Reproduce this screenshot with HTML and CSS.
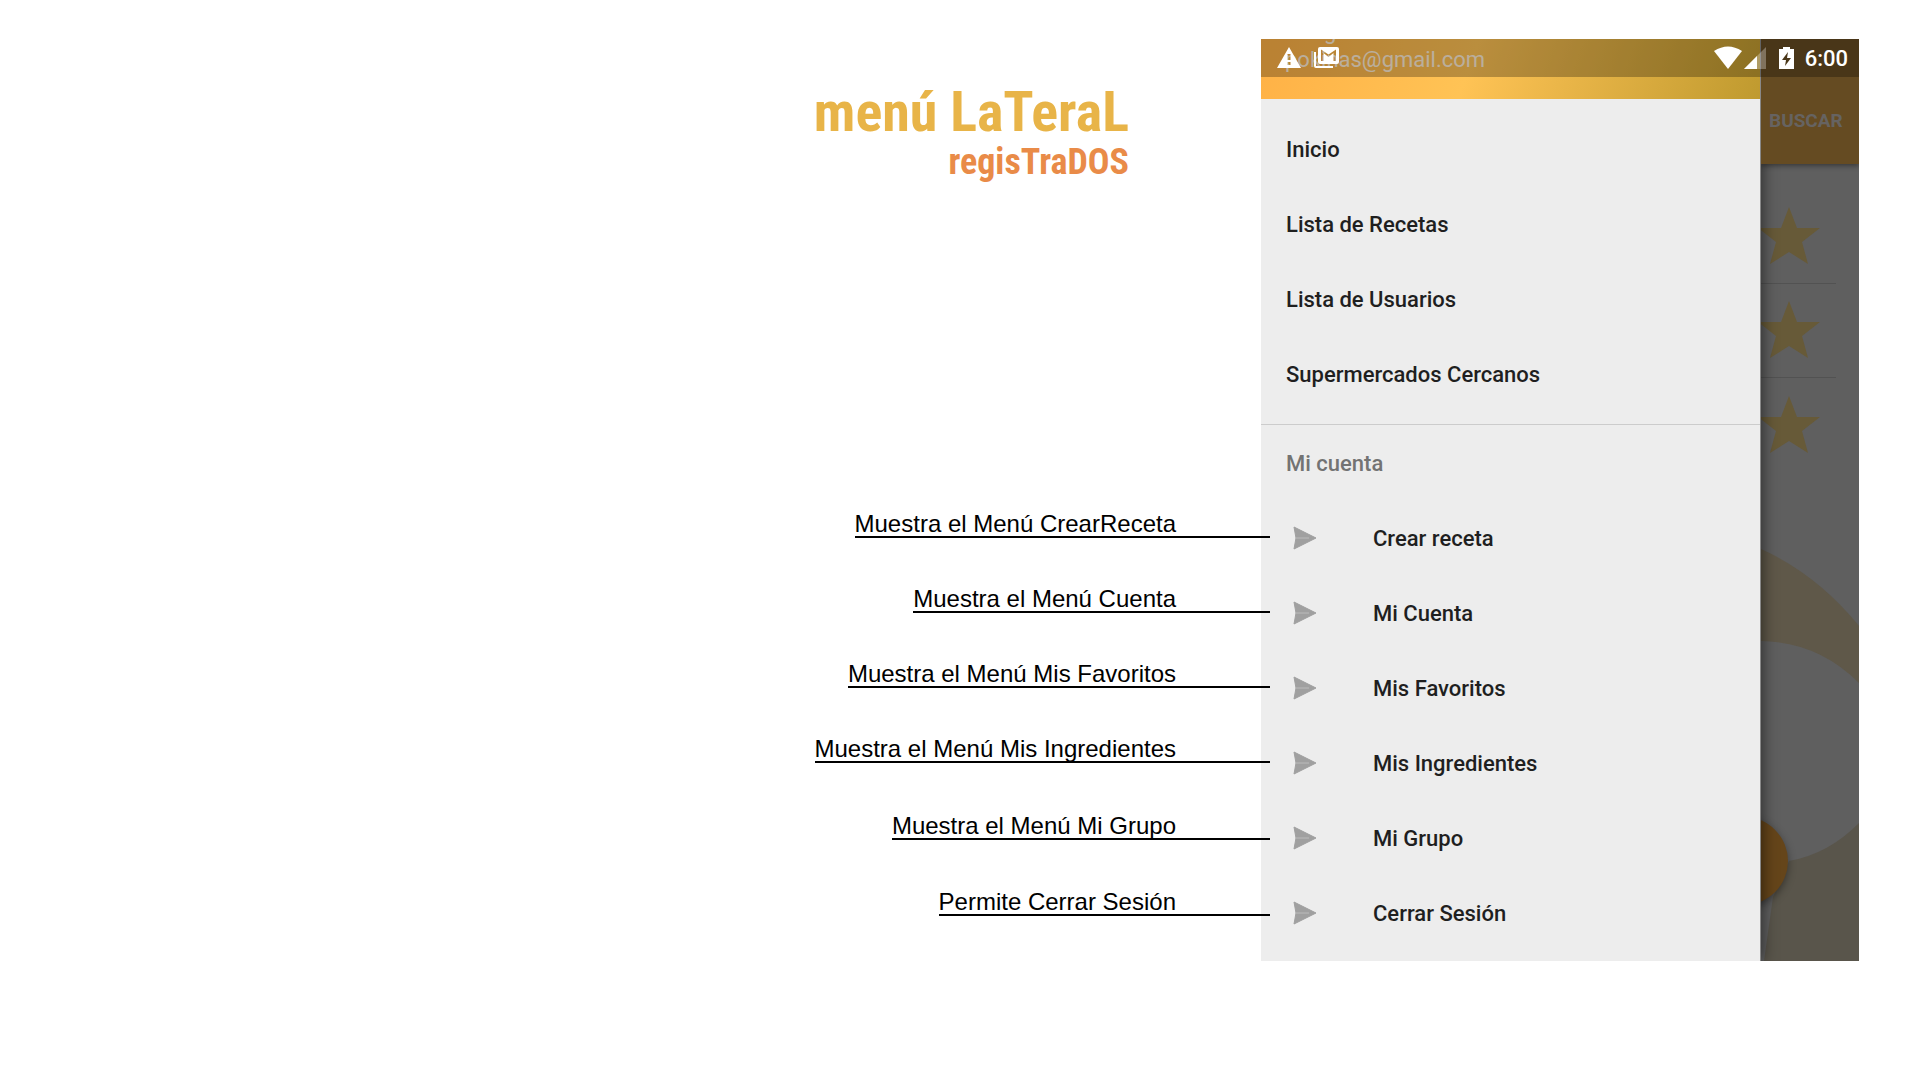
FILE: index.html
```html
<!DOCTYPE html>
<html lang="es">
<head>
<meta charset="utf-8">
<title>Menú lateral</title>
<link rel="stylesheet" href="styles.css">
</head>
<body>
<main class="slide">
  <section class="notes">
    <h1 class="title">menú LaTeraL<span class="subtitle">regisTraDOS</span></h1>
    <ul class="callouts">
      <li><span class="callout">Muestra el Menú CrearReceta</span></li>
      <li><span class="callout">Muestra el Menú Cuenta</span></li>
      <li><span class="callout">Muestra el Menú Mis Favoritos</span></li>
      <li><span class="callout">Muestra el Menú Mis Ingredientes</span></li>
      <li><span class="callout">Muestra el Menú Mi Grupo</span></li>
      <li><span class="callout">Permite Cerrar Sesión</span></li>
    </ul>
  </section>

  <section class="phone">
    <div class="drawer">
      <header class="account">
        <span class="name">Morgan</span>
        <span class="email">pokinas@gmail.com</span>
      </header>
      <nav class="menu">
        <a href="#">Inicio</a>
        <a href="#">Lista de Recetas</a>
        <a href="#">Lista de Usuarios</a>
        <a href="#">Supermercados Cercanos</a>
      </nav>
      <nav class="menu own">
        <h2>Mi cuenta</h2>
        <a href="#"><svg class="send" viewBox="0 0 24 24"><use href="#send"/></svg>Crear receta</a>
        <a href="#"><svg class="send" viewBox="0 0 24 24"><use href="#send"/></svg>Mi Cuenta</a>
        <a href="#"><svg class="send" viewBox="0 0 24 24"><use href="#send"/></svg>Mis Favoritos</a>
        <a href="#"><svg class="send" viewBox="0 0 24 24"><use href="#send"/></svg>Mis Ingredientes</a>
        <a href="#"><svg class="send" viewBox="0 0 24 24"><use href="#send"/></svg>Mi Grupo</a>
        <a href="#"><svg class="send" viewBox="0 0 24 24"><use href="#send"/></svg>Cerrar Sesión</a>
      </nav>
    </div>
    <div class="app">
      <div class="appbar"><button class="search" type="button">BUSCAR</button></div>
      <svg class="scene" viewBox="0 0 99 797" preserveAspectRatio="xMinYMin slice">
        <path fill="#5f5849" d="M0 385Q56 410 99 463V797H0z"/>
        <path fill="#59554b" d="M0 640H99V797H0z"/>
        <path fill="#5f5f5f" d="M0 477Q58 478 99 520V658Q68 690 28 697L12 733L3 797H0z"/>
        <g fill="#675a38">
          <path id="star" d="M28 43l8 21h23L41 78l6 22-19-12-19 12 6-22L-3 64h23z"/>
          <use href="#star" y="94"/><use href="#star" y="189"/>
        </g>
        <path stroke="#525252" d="M0 119.500H75M0 213.500H75"/>
        <circle class="fab" cx="-17" cy="697" r="44" fill="#65451a"/>
      </svg>
    </div>
    <div class="status">
      <svg class="alerts" viewBox="0 0 64 22" fill="#fff">
        <path fill-rule="evenodd" d="M12 0L24 21H0zM10.500 7v6h3V7zM10.500 15v3h3v-3z"/>
        <path d="M39 5v14h17v2H39q-2 0-2-2V5z"/>
        <path fill-rule="evenodd" d="M43 0h17q2 0 2 2v13q0 2-2 2H43q-2 0-2-2V2q0-2 2-2zM44 2.500V14h2.500V6l5 4 5-4v8H59V2.500l-7.500 5z"/>
      </svg>
      <svg class="signals" viewBox="0 0 82 24" fill="#fff">
        <path d="M0 5Q14-4 28 5L14 23z"/>
        <path opacity=".3" d="M52 1v22H30z"/><path d="M43 10v13H30z"/>
        <path fill-rule="evenodd" d="M69 1h7v2h4v20H65V3h4zM74 6l-6 8h4l-1 6 6-8h-4z"/>
      </svg>
      <time>6:00</time>
    </div>
  </section>
</main>
<svg class="defs" width="0" height="0"><defs>
  <g id="send"><path fill="#a0a0a0" stroke="#a0a0a0" stroke-linejoin="round" d="M1 1L23 12L1 23L3 12z"/><path stroke="#bbb" d="M3 12H16"/></g>
</defs></svg>
</body>
</html>
```
FILE: styles.css
```css
* { box-sizing: border-box; }
body { margin: 0; background: #fff; font-family: Roboto, sans-serif; }
.defs { position: absolute; }
.slide { display: grid; grid-template-columns: 1261fr 598fr; padding: 39px 61px 0 0; }

.notes { z-index: 2; margin-right: -9px; display: flex; flex-direction: column; align-items: flex-end; }
.title { margin: 40px 141px 0 0; font: bold 56px/66px "Roboto Condensed", "Liberation Sans Narrow", sans-serif; color: #e8b448; text-align: right; }
.subtitle { display: block; font-size: 36px; line-height: 34px; color: #e98b48; }
.callouts { list-style: none; margin: 333px 0 0; padding: 0; display: flex; flex-direction: column; align-items: flex-end; }
.callouts li { height: 75px; }
.callouts li:nth-child(4) { height: 77px; }
.callouts li:nth-child(5) { height: 76px; }
.callouts li:last-child { height: auto; }
.callout { display: block; padding-right: 94px; border-bottom: 2px solid #000; font: 24px/24px "Liberation Sans", sans-serif; color: #000; white-space: nowrap; }

.phone { z-index: 1; position: relative; display: grid; grid-template-columns: 500fr 98fr; background: #5f5f5f; }
.drawer { z-index: 1; background: #ededed; border-right: 1px solid #888; box-shadow: 2px 0 14px rgba(0,0,0,.5); clip-path: inset(0 -20px 0 0); padding-bottom: 10px; }
.account { height: 60px; overflow: hidden; display: flex; flex-direction: column; justify-content: flex-end; padding: 0 25px 25px 24px; background: linear-gradient(110deg, #ffb146 0%, #ffc355 42%, #bf9a2f 100%); color: #ffefd8; font-size: 22px; line-height: 28px; }
.menu { padding: 13px 0 12px; display: flex; flex-direction: column; }
.menu a { height: 75px; padding: 0 25px; display: flex; align-items: center; color: #1f1f1f; font-size: 22px; font-weight: 500; text-decoration: none; }
.own { border-top: 1px solid #ccc; padding: 0; }
.own h2 { margin: 0; padding: 0 25px; height: 76px; line-height: 78px; font-size: 22px; font-weight: 500; color: #737373; }
.send { width: 24px; height: 24px; margin: 0 56px 2px 7px; }

.app { display: flex; flex-direction: column; overflow: hidden; }
.appbar { height: 125px; padding: 38px 0 0 8px; background: #654b22; box-shadow: 0 2px 5px rgba(0,0,0,.4); z-index: 1; display: flex; align-items: center; }
.search { border: 0; padding: 0; background: none; color: #666361; font: bold 19px/24px Roboto, sans-serif; }
.scene { width: 100%; flex: 1; min-height: 0; }
.fab { filter: drop-shadow(0 3px 4px rgba(0,0,0,.4)); }
.status { position: absolute; z-index: 2; inset: 0 0 auto; height: 38px; padding: 0 11px 0 16px; display: flex; align-items: center; background: rgba(0,0,0,.27); color: #fff; font-size: 22px; font-weight: 500; }
.alerts { width: 64px; height: 22px; margin-right: auto; }
.signals { width: 82px; height: 24px; margin-right: 9px; }
```
